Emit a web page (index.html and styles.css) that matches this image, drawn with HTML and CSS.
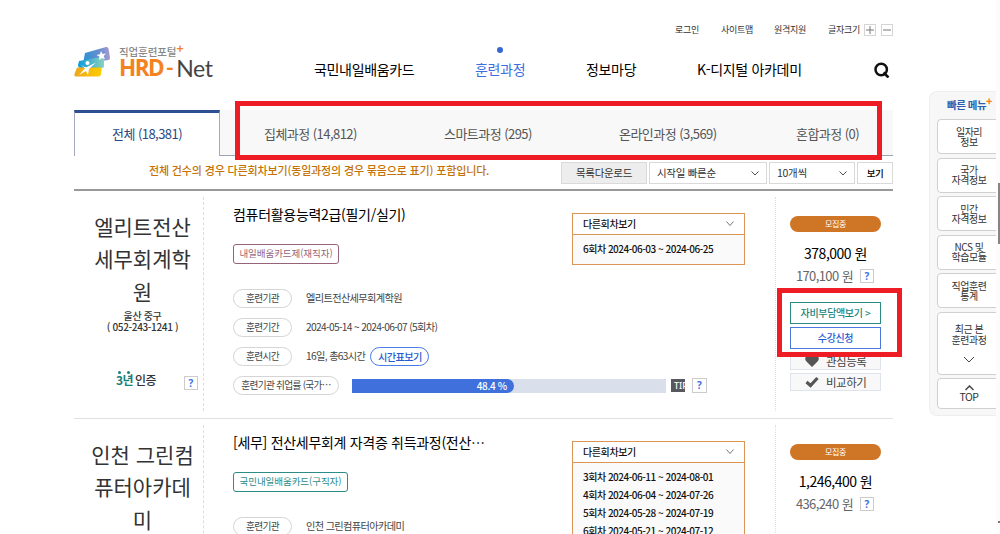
FILE: index.html
```html
<!DOCTYPE html>
<html lang="ko">
<head>
<meta charset="utf-8">
<title>HRD-Net 훈련과정</title>
<link rel="stylesheet" href="styles.css">
</head>
<body>
<div class="page">
  <div class="wrap">
    <header class="header">
      <div class="logo">
        <svg class="logo-mark" width="37" height="31" viewBox="0 0 37 31">
          <defs>
            <linearGradient id="g1" x1="0" x2="1"><stop offset="0" stop-color="#2a91d4"/><stop offset=".6" stop-color="#6b8fd0"/><stop offset="1" stop-color="#a79bd0"/></linearGradient>
            <linearGradient id="g2" x1="0" x2="1"><stop offset="0" stop-color="#0b9ad9"/><stop offset="1" stop-color="#8ed0bd"/></linearGradient>
            <linearGradient id="g3" x1="0" x2="1"><stop offset="0" stop-color="#eda51c"/><stop offset="1" stop-color="#ffce00"/></linearGradient>
          </defs>
          <path d="M11 7 32 1q2-.5 2.500 1.500l1.500 9q.3 2-1.500 2.500L12 17q-3 .5-2.500-2z" fill="url(#g1)"/>
          <path d="M5 15 27 11q3-.4 3 2v7q0 2-3 2H7q-3 0-3-3z" fill="url(#g2)"/>
          <path d="M3 21.500h23q2 0 1.700 2l-.8 5q-.3 2-2.300 2H2q-2 0-1.700-2z" fill="url(#g3)"/>
          <path d="m27 5 1.600 3 3.400-.4-2.300 2.500 1.300 3.200-3.200-1.400-2.600 2.300.3-3.500-2.900-1.800 3.400-.7z" fill="#fff"/>
          <circle cx="13.500" cy="17" r="2" fill="#fff"/>
          <path d="M5 17q5 5 8 4l9-4.500-7 6.500-1 6-2-4-7 4 6-6.500z" fill="#fff"/>
        </svg>
        <div class="logo-text">
          <span class="logo-sub">직업훈련포털<b>+</b></span>
          <span class="logo-main"><b>HRD</b><i>-</i><span>Net</span></span>
        </div>
      </div>
      <div class="header-body">
        <ul class="util">
          <li class="u1">로그인</li><li class="u2">사이트맵</li><li class="u3">원격지원</li><li>글자크기</li>
          <li class="zoom zoom-in"><svg width="12" height="12"><path d="M2 6h8M6 2v8" stroke="#777"/></svg></li>
          <li class="zoom"><svg width="12" height="12"><path d="M2 6h8" stroke="#777"/></svg></li>
        </ul>
        <nav class="gnb">
          <a class="n1">국민내일배움카드</a><a class="n2 on">훈련과정</a><a class="n3">정보마당</a><a class="n4">K-디지털 아카데미</a>
          <svg class="search" width="16" height="16" viewBox="0 0 16 16" fill="none" stroke="#111" stroke-width="2.500"><circle cx="7.200" cy="7.500" r="5.700"/><path d="m9.500 10.500 5 5"/></svg>
        </nav>
      </div>
    </header>

    <ul class="tabs">
      <li class="on">전체 (18,381)</li><li class="t2">집체과정 (14,812)</li><li class="t3">스마트과정 (295)</li><li class="t4">온라인과정 (3,569)</li><li class="t5">혼합과정 (0)</li>
    </ul>

    <div class="toolbar">
      <p class="notice">전체 건수의 경우 다른회차보기(동일과정의 경우 묶음으로 표기) 포함입니다.</p>
      <span class="btn download">목록다운로드</span>
      <span class="btn select sort">시작일 빠른순<svg class="chev" width="8" height="5"><path d="m.5.500 3.500 3.500L7.500.5" fill="none" stroke="#555"/></svg></span>
      <span class="btn select count">10개씩<svg class="chev" width="8" height="5"><path d="m.5.500 3.500 3.500L7.500.5" fill="none" stroke="#555"/></svg></span>
      <span class="btn view">보기</span>
    </div>

    <section class="item">
      <div class="org">
        <h3>엘리트전산<br>세무회계학<br>원</h3>
        <p>울산 중구<br>( 052-243-1241 )</p>
        <div class="cert"><span class="years">3년</span><span class="cert-label">인증</span><span class="help">?</span></div>
      </div>
      <div class="main">
        <h2>컴퓨터활용능력2급(필기/실기)</h2>
        <span class="card plum">내일배움카드제(재직자)</span>
        <dl class="info">
          <div><dt>훈련기관</dt><dd>엘리트전산세무회계학원</dd></div>
          <div><dt>훈련기간</dt><dd>2024-05-14 ~ 2024-06-07 (5회차)</dd></div>
          <div><dt>훈련시간</dt><dd>16일, 총63시간</dd><dd class="timetable">시간표보기</dd></div>
          <div><dt class="wide">훈련기관 취업률 (국가⋯</dt><dd class="rate"><span class="bar"><span class="fill" style="width:51.5%">48.4 %</span></span><span class="tip">TIP</span><span class="help">?</span></dd></div>
        </dl>
        <div class="rounds">
          <div class="rounds-head">다른회차보기<svg width="8" height="6"><path d="m.5.500 3.500 4L7.500.5" fill="none" stroke="#777"/></svg></div>
          <ul><li>6회차 2024-06-03 ~ 2024-06-25</li></ul>
        </div>
      </div>
      <div class="side">
        <span class="status">모집중</span>
        <strong>378,000 원</strong>
        <div class="self"><span>170,100 원</span><span class="help">?</span></div>
        <span class="act teal">자비부담액보기 &gt;</span>
        <span class="act blue">수강신청</span>
        <span class="sub-act"><svg width="14" height="12" viewBox="0 0 14 12"><path d="M7 12 1 6Q-.5 4 .7 2 3.500-1.500 7 2q3.500-3.500 6.300 0 1.200 2-.3 4z" fill="#555"/></svg>관심등록</span>
        <span class="sub-act"><svg width="14" height="12" viewBox="0 0 14 12"><path d="m1.500 6 4 3.500L12.500 2" fill="none" stroke="#555" stroke-width="3.200"/></svg>비교하기</span>
      </div>
    </section>

    <section class="item">
      <div class="org">
        <h3>인천 그린컴<br>퓨터아카데<br>미</h3>
      </div>
      <div class="main">
        <h2 class="long">[세무] 전산세무회계 자격증 취득과정(전산⋯</h2>
        <span class="card green">국민내일배움카드(구직자)</span>
        <dl class="info">
          <div><dt>훈련기관</dt><dd>인천 그린컴퓨터아카데미</dd></div>
        </dl>
        <div class="rounds">
          <div class="rounds-head">다른회차보기<svg width="8" height="6"><path d="m.5.500 3.500 4L7.500.5" fill="none" stroke="#777"/></svg></div>
          <ul><li>3회차 2024-06-11 ~ 2024-08-01</li><li>4회차 2024-06-04 ~ 2024-07-26</li><li>5회차 2024-05-28 ~ 2024-07-19</li><li>6회차 2024-05-21 ~ 2024-07-12</li></ul>
        </div>
      </div>
      <div class="side">
        <span class="status">모집중</span>
        <strong>1,246,400 원</strong>
        <div class="self"><span>436,240 원</span><span class="help">?</span></div>
      </div>
    </section>
  </div>

  <aside class="quick">
    <h4>빠른 메뉴<b>+</b></h4>
    <a>일자리<br>정보</a><a>국가<br>자격정보</a><a>민간<br>자격정보</a><a>NCS 및<br>학습모듈</a><a>직업훈련<br>통계</a>
    <a class="recent">최근 본<br>훈련과정<svg width="12" height="7"><path d="m1 1 5 5 5-5" fill="none" stroke="#444"/></svg></a>
    <a class="top"><svg width="9" height="6"><path d="m.5 5 4-4 4 4" fill="none" stroke="#444" stroke-width="1.500"/></svg>TOP</a>
  </aside>
  <div class="scroll"><span class="thumb"></span><span class="arrow"></span></div>
  <div class="mark mark-tabs"></div>
  <div class="mark mark-apply"></div>
</div>
</body>
</html>
```
FILE: styles.css
```css
* { box-sizing: border-box; margin: 0; padding: 0; }
body { font-family: "Noto Sans CJK KR", sans-serif; color: #333; background: #fff; }
ul { list-style: none; }
svg { display: block; flex: none; }
.page { position: relative; width: 1000px; height: 534px; overflow: hidden; }
.wrap { width: 819px; margin-left: 74px; }

.header { display: flex; height: 110px; }
.logo { display: flex; padding-top: 46px; width: 240px; }
.logo-mark { margin-right: 8px; }
.logo-text { white-space: nowrap; }
.logo-sub { display: block; font-size: 10.500px; font-weight: 500; line-height: 12px; letter-spacing: -.1px; color: #888; height: 11px; }
.logo-sub b { color: #f58220; font-size: 12px; line-height: 1px; vertical-align: 3px; }
.logo-main { display: flex; line-height: 22px; font-family: "Open Sans", sans-serif; font-size: 22.500px; color: #444; }
.logo-main b { color: #f58220; letter-spacing: -1.500px; }
.logo-main i { font-style: normal; font-weight: 600; color: #f58220; margin: 0 4px 0 3px; width: 6px; transform: translateY(-1px); }
.logo-main span { font-family: Lato, sans-serif; font-size: 23px; letter-spacing: -.4px; }
.header-body { flex: 1; }
.util { display: flex; align-items: center; padding-top: 24px; height: 36px; margin-left: 361px; font-size: 9px; letter-spacing: -.3px; color: #333; white-space: nowrap; }
.u1 { width: 46px; } .u2 { width: 53px; } .u3 { width: 54px; }
.util li:not(.zoom) { margin-top: -2px; }
.zoom { width: 12px; height: 12px; outline: 1px solid #d5d5d5; outline-offset: -1px; margin-left: 5px; }
.zoom-in { margin-left: 4px; }
.gnb { display: flex; align-items: center; height: 24px; margin-top: 21px; font-size: 14px; letter-spacing: -.33px; color: #000; white-space: nowrap; }
.gnb a { line-height: 20px; margin-top: -1px; }
.search { margin-top: 1px; }
.n1 { width: 161px; } .n2 { width: 111px; } .n3 { width: 111px; } .n4 { width: 177px; }
.gnb .on { color: #3c6ee0; position: relative; }
.on.n2::before { content: ""; position: absolute; left: 22px; top: -12px; width: 6px; height: 6px; border-radius: 3px; background: #3568d4; }

.tabs { display: flex; height: 46px; font-size: 13px; letter-spacing: -.55px; line-height: 47px; color: #555; white-space: nowrap; background: #f8f8f8; border-bottom: 1px solid #9ba3b6; }
.tabs .on { width: 146px; height: 46px; background: #fff; border: 1px solid #a3aabd; border-top: 3px solid #2d5091; border-bottom: 0; text-align: center; line-height: 42px; color: #294a88; }
.t2 { width: 180px; margin-left: 44px; } .t3 { width: 175px; } .t4 { width: 177px; }

.toolbar { display: flex; align-items: flex-start; height: 35px; padding-top: 6px; border-bottom: 2px solid #999; font-size: 10.500px; }
.notice { width: 413px; margin-left: 75px; margin-right: -1px; margin-top: -1px; font-size: 11px; line-height: 19px; font-weight: 500; letter-spacing: -.15px; color: #c57204; white-space: nowrap; }
.btn { display: flex; align-items: center; justify-content: center; height: 22px; border: 1px solid #d9d9d9; background: #fff; letter-spacing: -.3px; white-space: nowrap; line-height: 16px; }
.download { width: 86px; background: #ededed; }
.select { justify-content: space-between; padding: 0 7px; margin-left: 2px; }
.sort { width: 118px; } .count { width: 86px; }
.view { width: 36px; margin-left: 2px; font-size: 9.500px; font-weight: 500; color: #000; letter-spacing: -.5px; }

.item { display: flex; height: 228px; padding: 6px 0 7px; border-bottom: 1px solid #e0e0e0; }
.org { width: 130px; padding: 13px 0 0 8px; border-right: 1px dashed #ddd; text-align: center; }
.org h3 { font-size: 21px; font-weight: 400; line-height: 32.300px; color: #333; white-space: nowrap; }
.org p { font-size: 10px; font-weight: 500; line-height: 11px; letter-spacing: -.35px; margin-top: 3px; }
.cert { display: flex; align-items: center; height: 20px; margin-top: 38px; padding-left: 34px; font-size: 12px; font-weight: 500; letter-spacing: -.6px; }
.years { color: #16807b; width: 19px; text-align: left; position: relative; font-weight: 700; }
.years::before { content: ""; position: absolute; left: 2px; top: 0; width: 3px; height: 3px; border-radius: 2px; background: #16807b; box-shadow: 9px 0 #16807b; }
.help { display: inline-block; width: 14px; height: 14px; border: 1px solid #ccc; background: #fff; text-align: center; font: 700 10px/12px "Open Sans", sans-serif; color: #3d6fe0; letter-spacing: 0; }
.cert .help { margin-left: 28px; margin-top: 7px; }
.main { position: relative; width: 572px; padding: 6px 0 0 29px; border-right: 1px dotted #ddd; }
.main h2 { font-size: 14px; line-height: 22px; font-weight: 400; letter-spacing: -.3px; color: #000; white-space: nowrap; }
.card { display: block; width: 106px; height: 20px; margin-top: 19px; border: 1px solid; border-radius: 3px; text-align: center; font-size: 9.500px; line-height: 17px; letter-spacing: -.05px; white-space: nowrap; }
.plum { color: #96637a; } .green { color: #2e8c86; width: 115px; }
.info { margin-top: 25px; font-size: 10.200px; letter-spacing: -.65px; color: #444; }
.info > div { display: flex; align-items: center; height: 19px; margin-bottom: 10px; white-space: nowrap; }
.info dd { line-height: 17px; padding-bottom: 2px; }
.info dt { width: 59px; height: 19px; border: 1px solid #d5d5d5; border-radius: 10px; text-align: center; line-height: 17px; margin-right: 14px; font-size: 9.700px; letter-spacing: -.7px; }
.info .wide { width: 106px; }
.info .timetable { width: 59px; height: 19px; margin-left: 5px; border: 1px solid #477be5; border-radius: 10px; text-align: center; line-height: 17px; padding: 0; color: #275bd2; font-weight: 500; }
.info .rate { display: flex; padding: 0; margin-left: -1px; }
.bar { display: block; width: 314px; height: 14px; background: #d9dfeb; }
.fill { display: block; height: 14px; border-radius: 0 7px 7px 0; background: #3f70dc; color: #fff; text-align: right; padding-right: 7px; line-height: 13px; font-size: 10px; letter-spacing: -.4px; font-weight: 500; }
.tip { width: 14px; height: 13px; margin-left: 5px; padding-left: 3px; background: #58585f; color: #fff; font: 500 9px/13px "Noto Sans", sans-serif; overflow: hidden; letter-spacing: 0; }
.rate .help { margin-left: 7px; height: 15px; width: 15px; margin-top: -1px; }
.rounds { position: absolute; left: 368px; top: 16px; width: 173px; border: 1px solid #dc9555; background: #fafafa; font-size: 10px; font-weight: 500; letter-spacing: -.5px; color: #111; white-space: nowrap; }
.rounds-head { display: flex; align-items: center; justify-content: space-between; height: 21px; padding: 0 10px 1px; background: #fff; border-bottom: 1px solid #dc9555; }
.rounds-head { letter-spacing: -.4px; }
.rounds ul { padding: 5px 10px 6px; }
.rounds li { height: 18px; line-height: 17px; }
.side { width: 116px; padding: 19px 0 0 14px; display: flex; flex-direction: column; white-space: nowrap; }
.status { width: 91px; height: 16px; border-radius: 8px; background: #cf7526; color: #fff; text-align: center; font-size: 8px; line-height: 15px; letter-spacing: -.4px; }
.side strong { width: 91px; text-align: center; margin-top: 10px; height: 22px; line-height: 22px; font-size: 14px; font-weight: 400; letter-spacing: -.5px; color: #000; }
.self { display: flex; align-items: center; justify-content: flex-end; width: 84px; height: 22px; font-size: 13px; letter-spacing: -.6px; color: #666; margin-top: 1px; }
.self span:first-child { margin-top: -2px; }
.self .help { margin-left: 7px; }
.act { width: 91px; height: 22px; margin-top: 15px; border: 1px solid #2b8b84; color: #19857d; text-align: center; font-size: 10px; line-height: 19px; letter-spacing: -.35px; font-weight: 500; }
.blue { margin-top: 3px; border-color: #4c77dc; color: #275bd2; }
.sub-act { display: flex; align-items: center; gap: 7px; padding-left: 14px; width: 91px; height: 18px; margin-top: 3px; border: 1px solid #dfe3eb; background: #f8f8f8; font-size: 11.500px; letter-spacing: -.5px; color: #444; line-height: 16px; }

.quick { position: absolute; left: 929px; top: 91px; width: 67px; height: 325px; padding: 6px 0 0 7px; border: 1px solid #eee; border-right: 0; border-radius: 8px 0 0 8px; background: #f7f7f7; font-size: 10px; line-height: 10px; letter-spacing: -.5px; overflow: hidden; }
.quick h4 { font-size: 10.500px; line-height: 14px; height: 21px; padding-left: 10px; color: #2a5fae; letter-spacing: -.5px; white-space: nowrap; }
.quick h4 b { color: #f58220; line-height: 1px; vertical-align: 4px; }
.quick a { display: flex; flex-direction: column; align-items: center; justify-content: center; height: 35px; width: 64px; margin-bottom: 3.500px; text-align: center; background: #fff; border: 1px solid #d0d0d0; border-radius: 4px; }
.quick .recent { height: 63px; line-height: 11px; }
.recent svg { margin-top: 11px; }
.quick .top { height: 31px; font-size: 10.500px; }
.top svg { margin-bottom: 1px; }
.scroll { position: absolute; left: 996px; top: 0; width: 4px; height: 534px; background: #fcfcfc; }
.thumb { position: absolute; left: 2px; top: 183px; width: 2px; height: 61px; background: #858585; }
.arrow { position: absolute; right: 0; bottom: 11px; width: 2px; height: 2px; background: #777; }
.mark { position: absolute; border: 5px solid #ee1c25; }
.mark-tabs { left: 235px; top: 101px; width: 647px; height: 59px; }
.mark-apply { left: 777px; top: 288px; width: 125px; height: 69px; }
```
